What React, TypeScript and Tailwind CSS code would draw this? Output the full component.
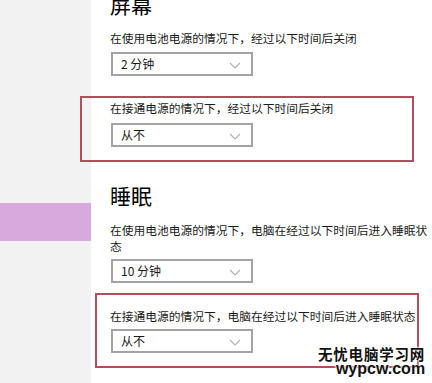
import React from "react";

const Chevron = () => (
  <svg width="12" height="7" viewBox="0 0 12 7" className="absolute right-[10px] top-[8px]">
    <path d="M1 1 L6 6 L11 1" fill="none" stroke="#b0b0b0" strokeWidth="1.1" />
  </svg>
);

const Dropdown = ({ label }: { label: string }) => (
  <div className="relative w-[142px] h-[24px] border-2 border-[#a3a3a3] bg-white flex items-center pl-[8px] text-[12px] text-[#1a1a1a]">
    {label}
    <Chevron />
  </div>
);

export default function App() {
  const font = { fontFamily: '"Noto Sans CJK SC", "Noto Sans", sans-serif' };
  return (
    <div
      className="relative w-[432px] h-[383px] overflow-hidden flex bg-white"
      style={font}
    >
      <div className="w-[91px] shrink-0 bg-[#f2f2f2] flex flex-col">
        <div className="mt-[203px] h-[38px] bg-[#d8a9dd]" />
      </div>
      <div className="flex-1 bg-white pl-[19px] pr-[4px] flex flex-col text-[#1a1a1a]">
        <div className="mt-[-10px] text-[21px] leading-[28px] text-black">屏幕</div>
        <div className="mt-[12px] text-[11.75px] leading-[16px]">
          在使用电池电源的情况下，经过以下时间后关闭
        </div>
        <div className="mt-[6px] ml-[1px]">
          <Dropdown label="2 分钟" />
        </div>
        <div className="mt-[20px] ml-[-30px] w-[334px] border-2 border-[#b24e5a] pl-[28px] pt-[2px] pb-[13px]">
          <div className="text-[11.75px] leading-[16px]">
            在接通电源的情况下，经过以下时间后关闭
          </div>
          <div className="mt-[7px] ml-[1px]">
            <Dropdown label="从不" />
          </div>
        </div>
        <div className="mt-[19px] text-[21px] leading-[28px] text-black">睡眠</div>
        <div className="mt-[13px] text-[11.75px] leading-[16px]">
          在使用电池电源的情况下，电脑在经过以下时间后进入睡眠状态
        </div>
        <div className="mt-[5px] ml-[1px]">
          <Dropdown label="10 分钟" />
        </div>
        <div className="mt-[10px] ml-[-15px] w-[324px] border-2 border-[#b24e5a] pl-[13px] pt-[13px] pb-[13px]">
          <div className="text-[11.75px] leading-[16px] whitespace-nowrap">
            在接通电源的情况下，电脑在经过以下时间后进入睡眠状态
          </div>
          <div className="mt-[5px] ml-[1px]">
            <Dropdown label="从不" />
          </div>
        </div>
      </div>
      <div
        className="absolute left-[318px] top-[345px] flex flex-col items-end leading-none text-[#111]"
        style={{ textShadow: "0 0 2px #fff, 0 0 2px #fff, 0 0 3px #fff" }}
      >
        <div className="text-[14.5px] font-bold tracking-[0.8px] leading-[18px]">无忧电脑学习网</div>
        <div
          className="text-[16px] font-bold leading-[16px] mt-[-2px]"
          style={{ fontFamily: '"Liberation Sans", Arial, sans-serif' }}
        >
          wypcw.com
        </div>
      </div>
    </div>
  );
}
